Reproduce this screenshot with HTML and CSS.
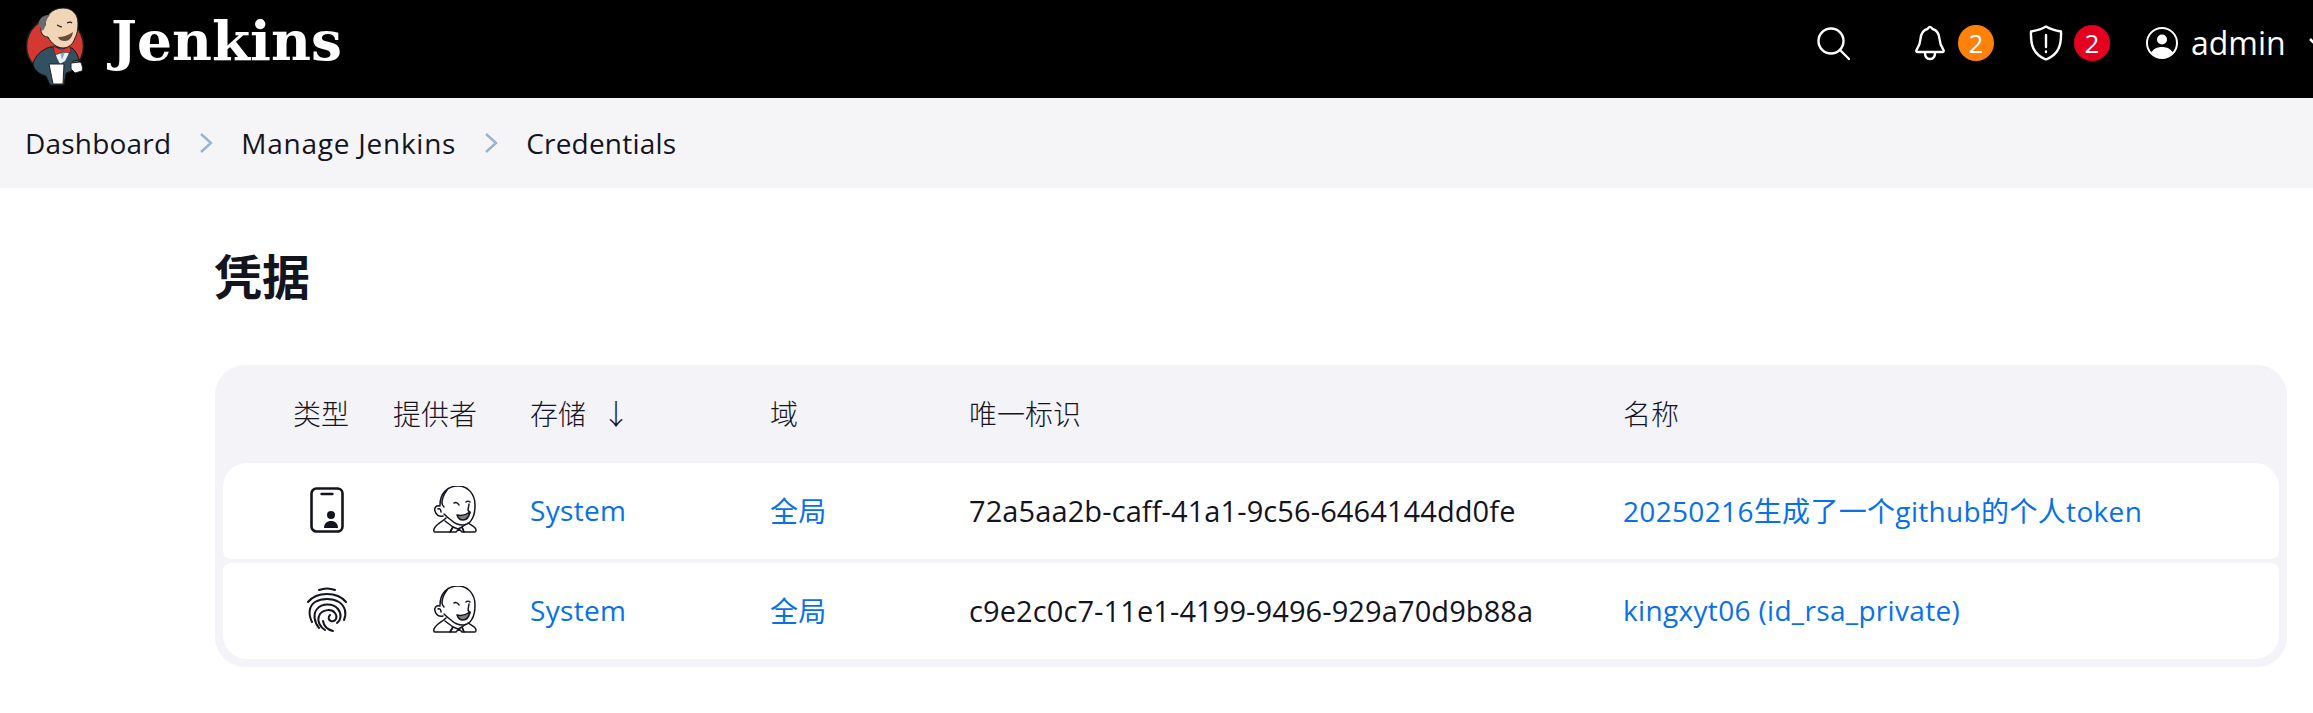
FILE: index.html
```html
<!DOCTYPE html>
<html lang="zh">
<head>
<meta charset="utf-8">
<title>Jenkins</title>
<link rel="stylesheet" href="styles.css">
</head>
<body>
<svg class="defs" width="0" height="0" aria-hidden="true">
  <symbol id="butler" viewBox="0 0 44 48">
    <g fill="none" stroke="#14141f" stroke-width="1.500" stroke-linecap="round" stroke-linejoin="round">
      <path d="M7 19C7 8 14 0 25 0c10 0 17 8 17 19 0 6-1 11-3 14-2 4-5 6-9 6-5 0-9-2-12-5-3-2-5-4-7-6"/>
      <path d="M14 4c-3 4-5 9-5 13 0 2 1 3 2 4"/>
      <path d="M7 20c-4-1-6 2-5 5 1 4 4 6 8 5"/>
      <path d="M5 23c2-1 3 1 3 3"/>
      <path d="M13 32C9 36 3 38 1 43c-.5 2 0 3 1 3h15l3-5-8-6"/>
      <path d="M35 37c3 2 8 4 8 7 0 2 0 2-1 2H31l-2-5 4-3"/>
      <path d="M20 41l-3 5h6l3-3 3 3h2l-2-5-4 2z"/>
      <path d="M21 17c2-1 4 0 5 2M33 16c1-1 3-1 4 0"/>
      <path d="M36 18l-1 6 2 3"/>
      <path d="M24 29c4 1 9 0 13-3-1 5-3 8-7 8-3 0-5-2-6-5z" fill="#14141f" fill-opacity=".55"/>
    </g>
  </symbol>
</svg>

<header class="topbar">
  <a class="brand" href="#">
    <svg class="brand-logo" viewBox="0 0 70 90" width="70" height="90" aria-hidden="true">
      <circle cx="35" cy="42" r="28.500" fill="#d33833" stroke="#1d1d1d" stroke-width="1.500"/>
      <path d="M13 60c2-8 8-14 17-17l22 1c4 3 6 8 7 12l-6 1-1 10-6 2-2 12H30l-4-9c-7-2-12-6-13-12z" fill="#335061" stroke="#151515"/>
      <path d="M34 46l17-1-6 12-5 3-3-6z" fill="#eaf2f6"/>
      <path d="M40 48h5l-3 8z" fill="#81b0c4"/>
      <path d="M25 22c0-10 7-18 18-18 9 0 15 6 15 15 0 7-1 11-3 15-2 6-6 10-12 10-6 0-12-5-15-11-4 0-7-3-7-7 0-4 2-6 4-4z" fill="#f0d6b7" stroke="#1d1d1d"/>
      <path d="M19 22c-2-6 4-12 11-11-3 3-5 7-5 12l-2 4c-1-2-3-3-4-5z" fill="#6d6b6d"/>
      <path d="M37 21c2 1 3 2 5 2M47 19c2-1 4-1 5 0" fill="none" stroke="#1d1d1d" stroke-width="1.200"/>
      <path d="M38 33c5 0 11-2 15-5-1 6-4 9-8 9-3 0-6-1-7-4z" fill="#6b4a3a"/>
      <path d="M33 42l9 4 8-4 1 7-8-1-8 3z" fill="#e0342f" stroke="#222" stroke-width=".6"/>
      <path d="M29 60h15l-1 20H33z" fill="#fff" stroke="#222"/>
      <path d="M51 59l9-1c2 1 3 7 2 9l-7 2-4-4z" fill="#fff" stroke="#222"/>
    </svg>
    <span class="brand-name">Jenkins</span>
  </a>
  <div class="top-actions">
    <svg class="top-icon search" viewBox="0 0 33 33" aria-hidden="true"><circle cx="14" cy="14" r="12.500"/><path d="M23 23l9 9"/></svg>
    <div class="notice bell">
      <svg class="top-icon" viewBox="0 0 30 36" aria-hidden="true"><path d="M15 2c1.500 0 2 1 2.500 2 5 1 6.500 5 7 10 .5 6 2 8 4 11 .5 1 0 2-1 2h-25c-1 0-1.500-1-1-2 2-3 3.500-5 4-11 .5-5 2-9 7-10 .5-1 1-2 2.500-2z"/><path d="M10 28c0 4 2 6 5 6s5-2 5-6"/></svg>
      <span class="badge warn">2</span>
    </div>
    <div class="notice shield">
      <svg class="top-icon" viewBox="0 0 34 36" aria-hidden="true"><path d="M17 1.500c4 2.500 9 4 15 5 .5 13-2 23-15 28C4 29.500 1.500 19.500 2 6.500c6-1 11-2.500 15-5z"/><path d="M17 10v12M17 26.500v.5"/></svg>
      <span class="badge danger">2</span>
    </div>
    <div class="user">
      <svg class="avatar" viewBox="0 0 32 32" aria-hidden="true"><circle cx="16" cy="16" r="15" fill="none" stroke="#fff" stroke-width="2"/><circle cx="16" cy="12.500" r="5" fill="#fff"/><path d="M5 26c2-4 6-6 11-6s9 2 11 6c-3 3-7 5-11 5s-8-2-11-5z" fill="#fff"/></svg>
      <span class="user-name">admin</span>
      <svg class="caret" viewBox="0 0 20 12" aria-hidden="true"><path d="M2 2l8 8 8-8"/></svg>
    </div>
  </div>
</header>

<nav class="crumbs">
  <a class="tight" href="#">Dashboard</a>
  <svg class="sep" viewBox="0 0 14 22" aria-hidden="true"><path d="M2 2l10 9-10 9"/></svg>
  <a class="wide" href="#">Manage Jenkins</a>
  <svg class="sep" viewBox="0 0 14 22" aria-hidden="true"><path d="M2 2l10 9-10 9"/></svg>
  <a class="tight" href="#">Credentials</a>
</nav>

<main class="content">
  <h1 class="title">凭据</h1>
  <section class="panel">
    <div class="grid head">
      <span>类型</span>
      <span>提供者</span>
      <span>存储<i class="arrow">↓</i></span>
      <span>域</span>
      <span>唯一标识</span>
      <span>名称</span>
    </div>
    <div class="grid row first">
      <span class="type">
        <svg class="type-icon" viewBox="0 0 34 46" aria-hidden="true"><rect x="1.500" y="1.500" width="31" height="43" rx="5" fill="none" stroke="#14141f" stroke-width="2.600"/><path d="M11.500 7h11" stroke="#14141f" stroke-width="2.400" stroke-linecap="round"/><circle cx="21" cy="28" r="4" fill="#14141f"/><path d="M14 41c0-4.500 3-7 7-7s7 2.500 7 7z" fill="#14141f"/></svg>
      </span>
      <span class="prov"><svg class="butler-icon" aria-hidden="true"><use href="#butler"/></svg></span>
      <a href="#">System</a>
      <a href="#">全局</a>
      <span class="uid">72a5aa2b-caff-41a1-9c56-6464144dd0fe</span>
      <a href="#">20250216生成了一个github的个人token</a>
    </div>
    <div class="grid row last">
      <span class="type">
        <svg class="type-icon print" viewBox="0 0 42 46" aria-hidden="true"><g fill="none" stroke="#14141f" stroke-width="2" stroke-linecap="round"><path d="M13 3c5-2 11-2 16 0"/><path d="M2 15C7 9 13 7 21 7s14 2 19 8"/><path d="M6 35C2 27 3 19 9 15c7-4 17-4 24 0 6 4 8 11 5 18"/><path d="M13 41C8 35 7 27 11 22c5-6 16-6 21 0 4 5 3 11-1 14"/><path d="M19 43c-5-3-8-9-6-14 2-6 12-8 16-3 3 4 1 9-4 8-3-1-3-4-1-6"/><path d="M27 44c-4-1-9-4-10-10"/></g></svg>
      </span>
      <span class="prov"><svg class="butler-icon" aria-hidden="true"><use href="#butler"/></svg></span>
      <a href="#">System</a>
      <a href="#">全局</a>
      <span class="uid">c9e2c0c7-11e1-4199-9496-929a70d9b88a</span>
      <a href="#">kingxyt06 (id_rsa_private)</a>
    </div>
  </section>
</main>
</body>
</html>
```

FILE: styles.css
```css
* { box-sizing: border-box; }
html, body { margin: 0; padding: 0; }
body {
  width: 2313px;
  height: 713px;
  overflow: hidden;
  background: #fff;
  color: #14141f;
  font-family: "Open Sans", "Noto Sans CJK SC", sans-serif;
  font-size: 28px;
}
a { color: inherit; text-decoration: none; }
.defs { position: absolute; }

.topbar {
  height: 98px;
  background: #000;
  color: #fff;
  display: flex;
  align-items: center;
  justify-content: space-between;
  padding-left: 20px;
}
.brand { display: flex; align-items: center; gap: 21px; }
.brand-logo { display: block; flex: none; }
.brand-name {
  font-family: "DejaVu Serif", serif;
  font-weight: 700;
  font-size: 55px;
  line-height: 1;
  margin-bottom: 18px;
}
.top-actions {
  display: flex;
  align-items: center;
  flex: none;
  padding-bottom: 12px;
}
.top-icon { display: block; flex: none; fill: none; stroke: #fff; stroke-width: 2.400; stroke-linecap: round; stroke-linejoin: round; }
.search { width: 33px; height: 33px; margin-right: 65px; }
.notice { display: flex; align-items: center; }
.bell { gap: 13px; margin-right: 35px; }
.bell .top-icon { width: 30px; height: 36px; }
.shield { gap: 11px; margin-right: 36px; }
.shield .top-icon { width: 34px; height: 36px; }
.badge {
  width: 36px;
  height: 36px;
  border-radius: 50%;
  display: flex;
  align-items: center;
  justify-content: center;
  font-size: 26px;
  line-height: 1;
  color: #fff;
}
.warn { background: #fe820a; }
.danger { background: #e6001f; }
.user { display: flex; align-items: center; gap: 13px; width: 167px; }
.avatar { width: 32px; height: 32px; display: block; flex: none; }
.user-name { font-size: 32px; line-height: 1; }
.caret { width: 20px; height: 12px; fill: none; stroke: #fff; stroke-width: 2.500; margin-left: 9px; flex: none; }

.crumbs {
  height: 90px;
  background: #f5f5f8;
  display: flex;
  align-items: center;
  padding-left: 25px;
}
.sep { width: 14px; height: 22px; margin: 0 28px; fill: none; stroke: #9cb1cb; stroke-width: 2.400; }
.tight { letter-spacing: .2px; }
.wide { letter-spacing: .75px; }

.content { padding: 0 26px 0 214px; }
.title {
  margin: 0;
  padding-top: 56px;
  font-size: 48px;
  line-height: 65px;
  font-weight: 700;
  height: 177px;
}
.panel {
  background: #f3f3f8;
  border-radius: 30px;
  padding: 8px;
  display: flex;
  flex-direction: column;
  gap: 4px;
  width: 2072px;
  margin-left: 1px;
}
.grid {
  display: grid;
  grid-template-columns: 100px 137px 240px 199px 654px 1fr;
  align-items: center;
  padding-left: 70px;
}
.head { height: 86px; padding-bottom: 6px; font-weight: 300; }
.arrow { font-style: normal; margin-left: 16px; }
.row { height: 96px; background: #fff; padding-bottom: 2px; }
.row a { color: #0870e8; letter-spacing: .33px; }
.uid { font-size: 29px; letter-spacing: .1px; }
.first { border-radius: 24px 24px 8px 8px; }
.last { border-radius: 8px 8px 24px 24px; }
.type { display: flex; }
.type-icon { width: 34px; height: 46px; margin-left: 17px; display: block; }
.print { width: 42px; margin-left: 13px; }
.prov { display: flex; }
.butler-icon { width: 44px; height: 48px; margin-left: 40px; display: block; }
```
